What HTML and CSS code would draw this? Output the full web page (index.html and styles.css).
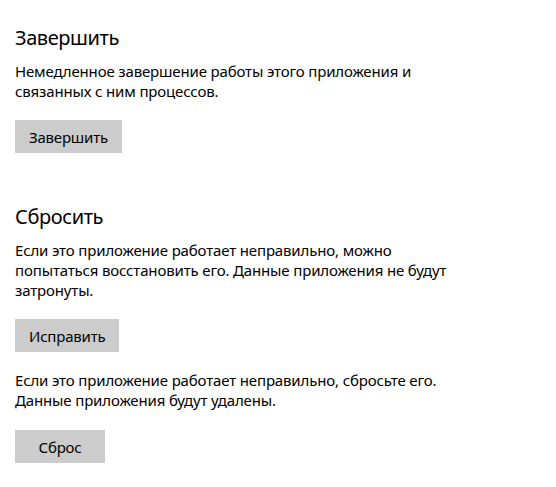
FILE: index.html
```html
<!DOCTYPE html>
<html lang="ru">
<head>
<meta charset="utf-8">
<link rel="stylesheet" href="styles.css">
</head>
<body>
<main class="page">
  <section class="section">
    <h2 class="title">Завершить</h2>
    <p class="text">Немедленное завершение работы этого приложения и<br>связанных с ним процессов.</p>
    <button class="btn">Завершить</button>
  </section>
  <section class="section section-reset">
    <h2 class="title">Сбросить</h2>
    <p class="text">Если это приложение работает неправильно, можно<br>попытаться восстановить его. Данные приложения не будут<br>затронуты.</p>
    <button class="btn">Исправить</button>
    <p class="text text-second">Если это приложение работает неправильно, сбросьте его.<br>Данные приложения будут удалены.</p>
    <button class="btn btn-last">Сброс</button>
  </section>
</main>
</body>
</html>
```
FILE: styles.css
```css
html, body {
  margin: 0;
  padding: 0;
  background: #ffffff;
}
body {
  font-family: "Noto Sans", "Open Sans", sans-serif;
  color: #000000;
}
.page {
  padding: 24px 15px 0 15px;
}
.section {
  display: flex;
  flex-direction: column;
  align-items: flex-start;
}
.section-reset {
  margin-top: 50px;
}
.title {
  margin: 0;
  font-size: 20px;
  font-weight: 400;
  line-height: 28px;
  letter-spacing: -0.4px;
}
.text {
  margin: 9px 0 0 0;
  font-size: 15px;
  line-height: 20px;
  letter-spacing: -0.15px;
}
.text-second {
  margin-top: 18px;
}
.btn {
  margin-top: 19px;
  height: 33px;
  min-width: 90px;
  padding: 0 14px;
  border: none;
  background: #cccccc;
  color: #000000;
  font-family: inherit;
  font-size: 15px;
  letter-spacing: -0.2px;
}
.btn-last {
  margin-top: 20px;
}
```
